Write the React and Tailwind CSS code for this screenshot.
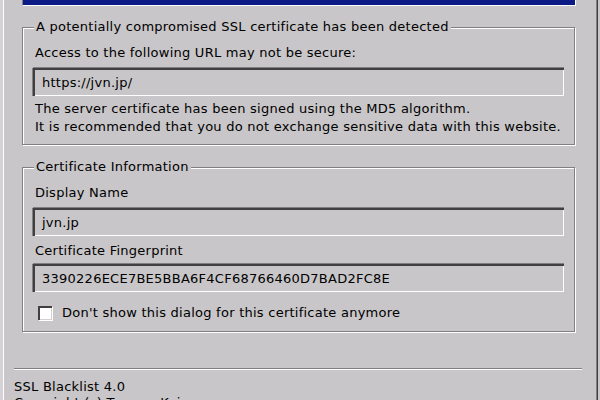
import React from "react";

function Etched({ className = "", title, children }) {
  return (
    <div
      className={
        "relative shrink-0 border border-[#808080] shadow-[1px_1px_0_#ffffff,inset_1px_1px_0_#ffffff] " +
        className
      }
    >
      <div className="absolute left-[11px] top-[-8px] px-[2px] bg-[#c8c6c8] leading-[14px]">
        {title}
      </div>
      {children}
    </div>
  );
}

function Field({ children, className = "" }) {
  return (
    <div
      className={
        "shrink-0 h-[28px] flex items-center pl-[7px] border-t-2 border-l-2 border-t-[#404040] border-l-[#404040] shadow-[0_-1px_0_#808080,-1px_0_0_#808080,inset_-1px_-1px_0_#ffffff] leading-[14px] " +
        className
      }
    >
      {children}
    </div>
  );
}

export default function App() {
  return (
    <div className="w-[600px] h-[400px] bg-[#c8c6c8] flex overflow-hidden text-[13px] tracking-[0.25px] text-black font-['DejaVu_Sans',sans-serif]">
      <div className="w-[3px] shrink-0 bg-[#d4d2d4]" />
      <div className="w-px shrink-0 bg-white" />
      <div className="flex-1 flex flex-col">
        <div className="shrink-0 ml-[18px] w-[554px] h-[6px] bg-[#0b1a84] border-l border-l-[#808080] border-r border-b border-r-white border-b-white" />

        <Etched title="A potentially compromised SSL certificate has been detected" className="ml-[18px] w-[553px] h-[118px] mt-[21px]">
          <div className="pt-[18px] pl-[12px] leading-[14px]">Access to the following URL may not be secure:</div>
          <Field className="ml-[10px] w-[531px] mt-[8px]">https://jvn.jp/</Field>
          <div className="pl-[12px] mt-[4px] leading-[18px]">
            <div>The server certificate has been signed using the MD5 algorithm.</div>
            <div>It is recommended that you do not exchange sensitive data with this website.</div>
          </div>
        </Etched>

        <Etched title="Certificate Information" className="ml-[18px] w-[553px] h-[165px] mt-[22px]">
          <div className="pt-[18px] pl-[12px] leading-[14px]">Display Name</div>
          <Field className="ml-[10px] w-[531px] mt-[8px]">jvn.jp</Field>
          <div className="pl-[12px] mt-[8px] leading-[14px]">Certificate Fingerprint</div>
          <Field className="ml-[10px] w-[531px] mt-[6px]">3390226ECE7BE5BBA6F4CF68766460D7BAD2FC8E</Field>
          <div className="flex items-center mt-[14px] ml-[15px] leading-[14px]">
            <div className="w-[14px] h-[14px] shrink-0 bg-white border-t-2 border-l-2 border-t-[#404040] border-l-[#404040] shadow-[inset_-1px_-1px_0_#d4d0d4,1px_1px_0_#ffffff]" />
            <div className="ml-[10px]">Don't show this dialog for this certificate anymore</div>
          </div>
        </Etched>

        <div className="shrink-0 ml-[10px] w-[568px] h-[2px] mt-[36px] border-t border-t-[#808080] border-b border-b-white" />
        <div className="shrink-0 ml-[10px] mt-[9px] leading-[16px]">SSL Blacklist 4.0</div>
        <div className="shrink-0 ml-[10px] leading-[16px]">Copyright (c) Tomasz Kojm</div>
      </div>
      <div className="w-px shrink-0 bg-[#808080]" />
      <div className="w-px shrink-0 bg-[#404040]" />
      <div className="w-[2px] shrink-0" />
    </div>
  );
}
